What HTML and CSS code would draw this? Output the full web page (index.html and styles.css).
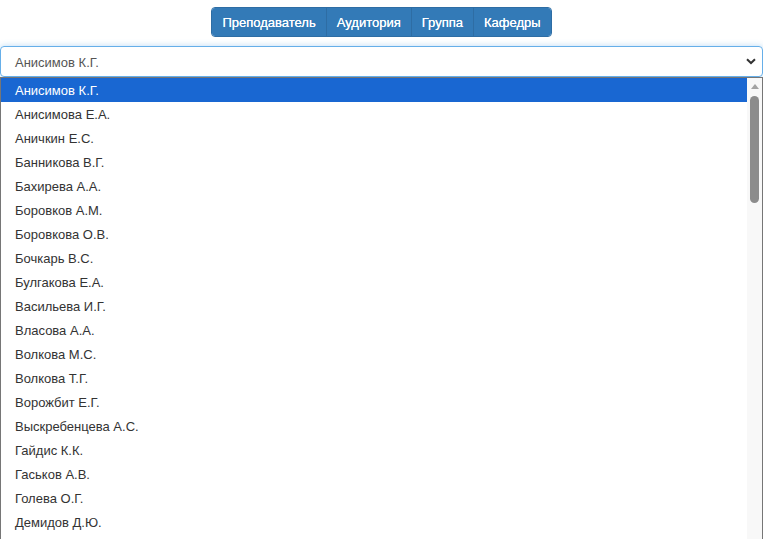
FILE: index.html
```html
<!DOCTYPE html>
<html lang="ru">
<head>
<meta charset="utf-8">
<link rel="stylesheet" href="styles.css">
</head>
<body>
<div class="bar">
  <div class="btn-group">
    <button class="btn">Преподаватель</button>
    <button class="btn">Аудитория</button>
    <button class="btn">Группа</button>
    <button class="btn">Кафедры</button>
  </div>
</div>
<div class="select">
  <span class="sel-text">Анисимов К.Г.</span>
  <svg class="chev" width="10" height="7" viewBox="0 0 10 7"><path d="M1 1.2 L5 5 L9 1.2" fill="none" stroke="#333" stroke-width="2"/></svg>
</div>
<div class="dropdown">
  <ul class="list">
    <li class="item active">Анисимов К.Г.</li>
    <li class="item">Анисимова Е.А.</li>
    <li class="item">Аничкин Е.С.</li>
    <li class="item">Банникова В.Г.</li>
    <li class="item">Бахирева А.А.</li>
    <li class="item">Боровков А.М.</li>
    <li class="item">Боровкова О.В.</li>
    <li class="item">Бочкарь В.С.</li>
    <li class="item">Булгакова Е.А.</li>
    <li class="item">Васильева И.Г.</li>
    <li class="item">Власова А.А.</li>
    <li class="item">Волкова М.С.</li>
    <li class="item">Волкова Т.Г.</li>
    <li class="item">Ворожбит Е.Г.</li>
    <li class="item">Выскребенцева А.С.</li>
    <li class="item">Гайдис К.К.</li>
    <li class="item">Гаськов А.В.</li>
    <li class="item">Голева О.Г.</li>
    <li class="item">Демидов Д.Ю.</li>
  </ul>
  <div class="scrollbar">
    <div class="arrow"></div>
    <div class="thumb"></div>
  </div>
</div>
</body>
</html>
```
FILE: styles.css
```css
html, body {
  margin: 0;
  padding: 0;
  background: #fff;
  font-family: "Liberation Sans", Arial, sans-serif;
  font-size: 13px;
  overflow: hidden;
  height: 539px;
}
body { padding-top: 7px; box-sizing: border-box; }
.bar {
  display: flex;
  justify-content: center;
  height: 30px;
}
.btn-group {
  display: flex;
  border-radius: 4px;
  overflow: hidden;
  border: 1px solid #2e6da4;
}
.btn {
  background: #337ab7;
  color: #fff;
  border: none;
  border-left: 1px solid #2e6da4;
  font-family: "Liberation Sans", Arial, sans-serif;
  font-size: 13px;
  padding: 0 10px;
  height: 28px;
  margin: 0;
  text-shadow: 0 0 0.4px #fff;
}
.btn:first-child { border-left: none; }
.select {
  margin-top: 9px;
  height: 31px;
  box-sizing: border-box;
  border: 1px solid #66afe9;
  border-radius: 4px;
  box-shadow: 0 0 6px rgba(102,175,233,0.45);
  display: flex;
  align-items: center;
  padding: 0 0 0 14px;
  color: #555;
}
.sel-text { flex: 1; padding-top: 1px; }
.chev { margin-right: 6px; }
.dropdown {
  display: flex;
  border: 1px solid #767676;
  border-bottom: none;
  height: 470px;
  overflow: hidden;
  background: #fff;
}
.list {
  list-style: none;
  margin: 0;
  padding: 0;
  flex: 1;
}
.item {
  height: 24px;
  box-sizing: border-box;
  padding-top: 1px;
  line-height: 23px;
  padding-left: 14px;
  color: #333;
}
.item.active {
  background: #1967d2;
  color: #fff;
}
.scrollbar {
  width: 15px;
  background: #f8f8f8;
  display: flex;
  flex-direction: column;
  align-items: center;
}
.arrow {
  margin-top: 6px;
  width: 0;
  height: 0;
  border-left: 4px solid transparent;
  border-right: 4px solid transparent;
  border-bottom: 5px solid #a3a3a3;
}
.thumb {
  margin-top: 7px;
  width: 9px;
  height: 107px;
  background: #8c8c8c;
  border-radius: 5px;
}
```
